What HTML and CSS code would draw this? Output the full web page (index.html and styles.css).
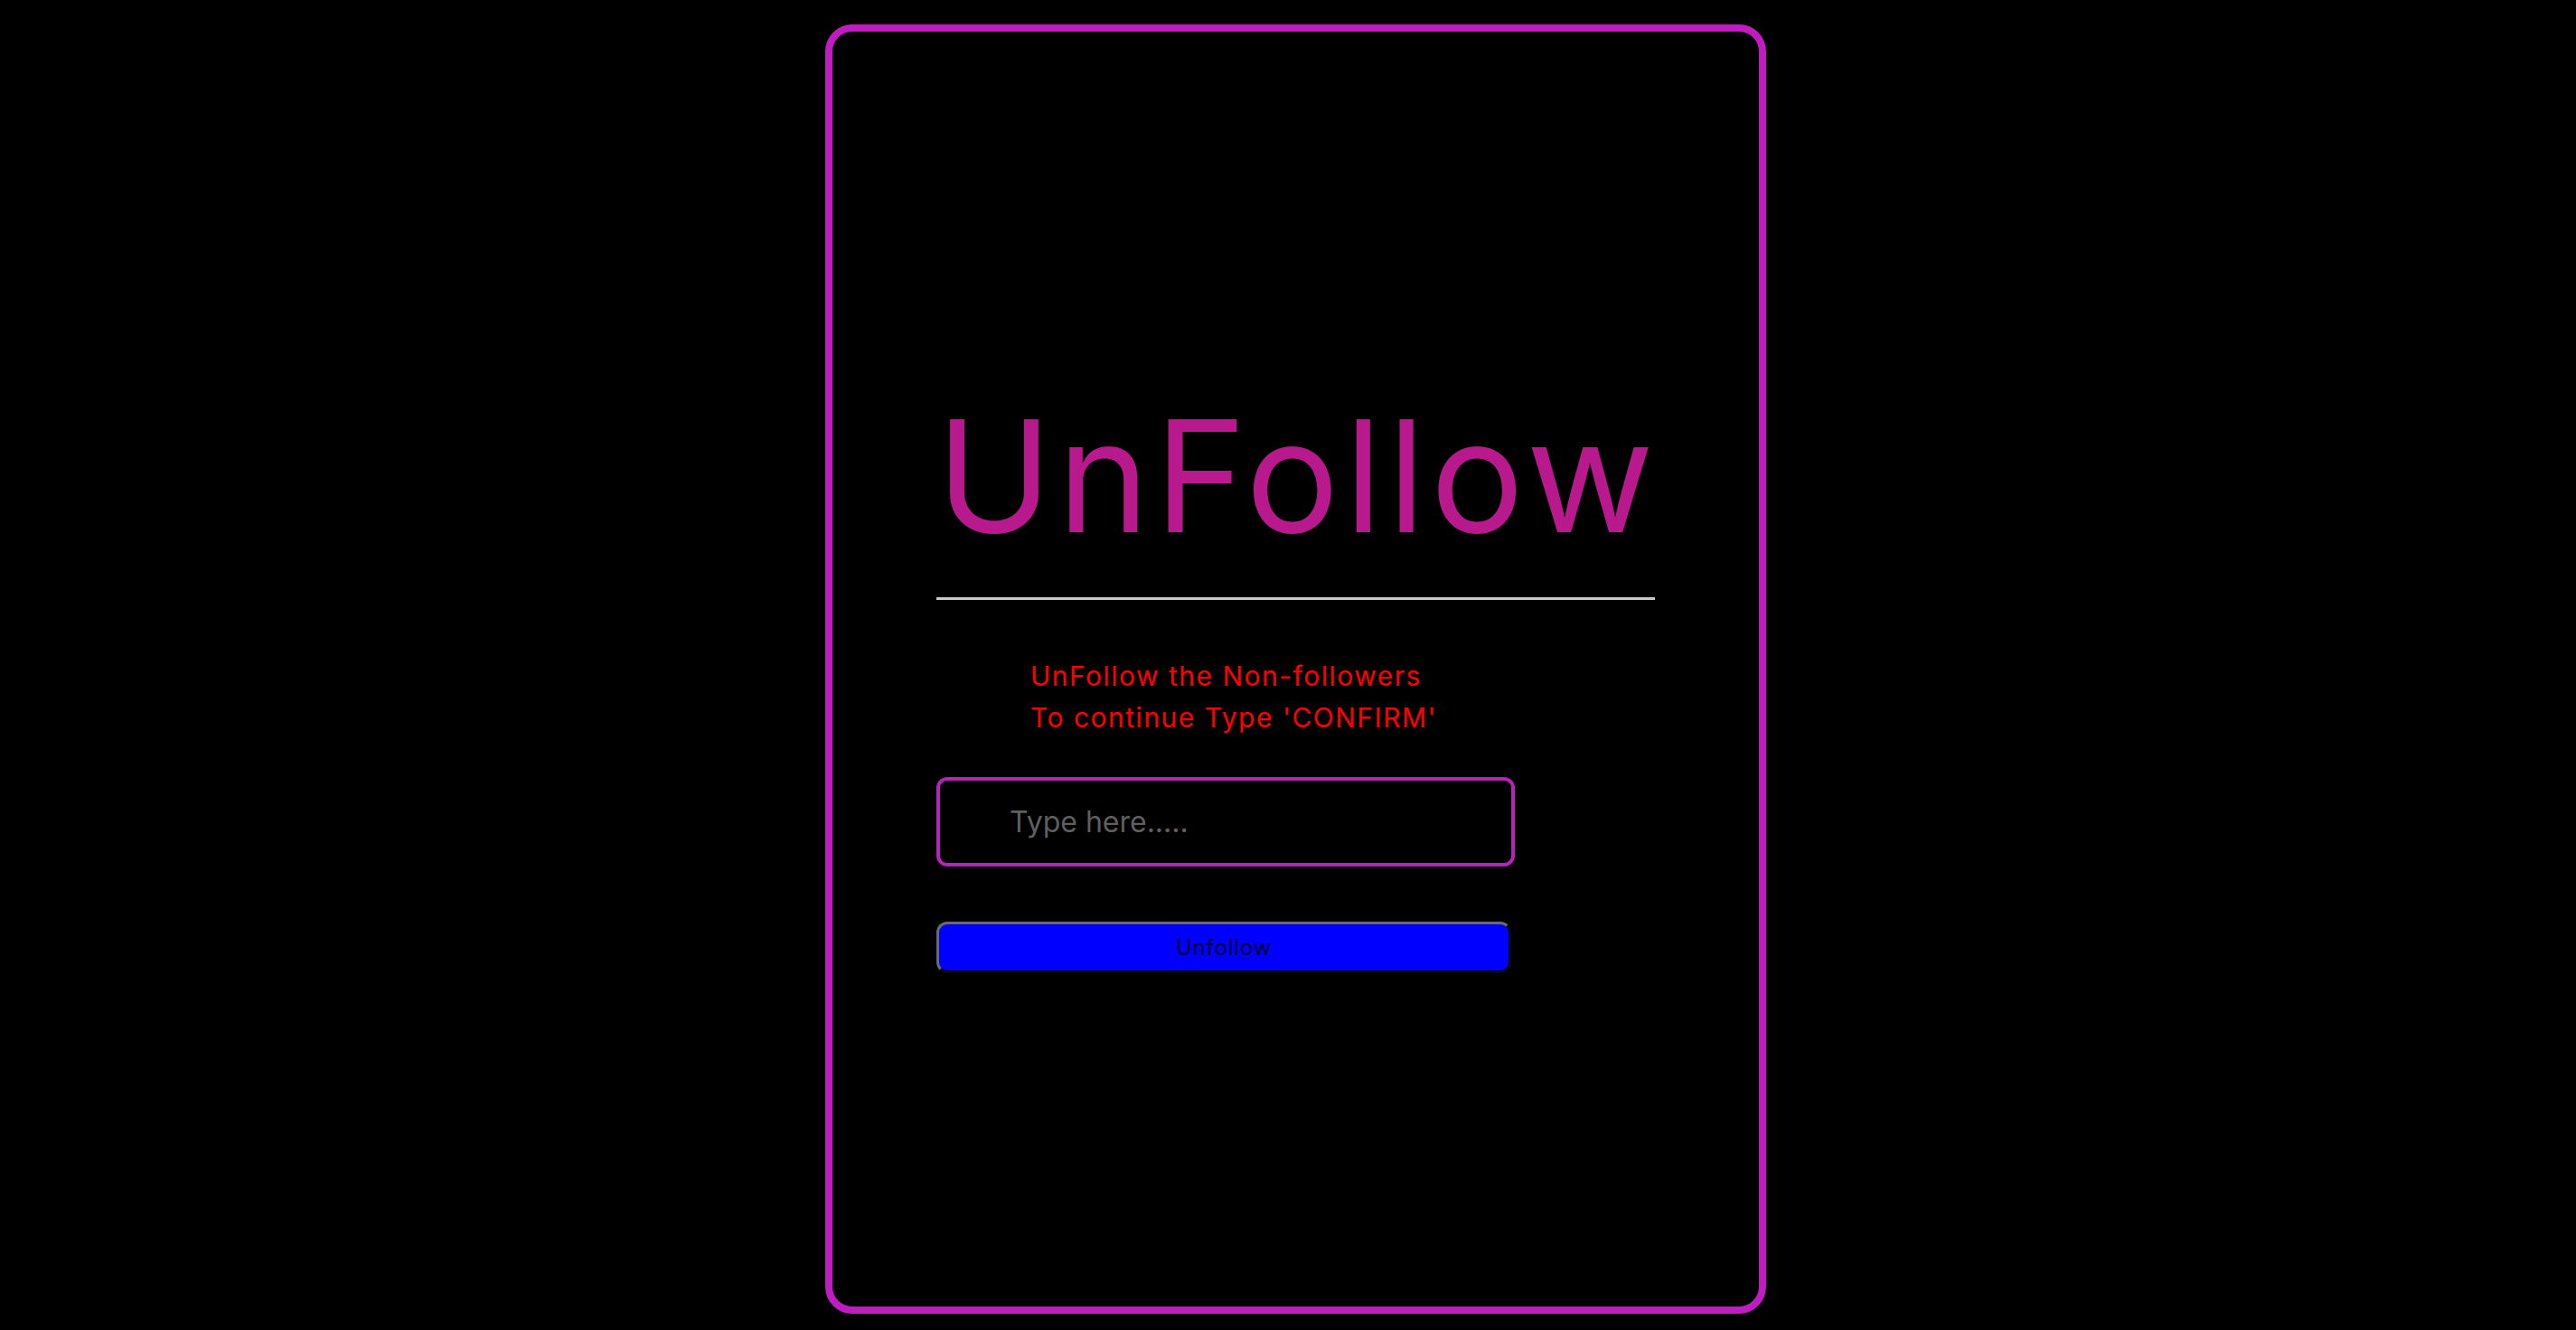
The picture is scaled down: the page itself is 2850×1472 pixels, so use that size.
FILE: index.html
```html
<!DOCTYPE html>
<html lang="en">
<head>
<meta charset="utf-8">
<title>UnFollow</title>
<link rel="stylesheet" href="styles.css">
</head>
<body>
  <main class="card">
    <h1 class="title">UnFollow</h1>
    <hr class="divider">
    <div class="notice">
      <p>UnFollow the Non-followers</p>
      <p>To continue Type 'CONFIRM'</p>
    </div>
    <input class="confirm-input" type="text" placeholder="Type here.....">
    <button class="unfollow-btn" type="button">Unfollow</button>
  </main>
</body>
</html>
```

FILE: styles.css
```css
html, body {
  margin: 0;
  padding: 0;
  background: #000;
}

body {
  width: 2850px;
  height: 1472px;
  box-sizing: border-box;
  padding: 27px 0 0 17px;
  display: flex;
  justify-content: center;
  align-items: flex-start;
  font-family: "Inter", "Liberation Sans", sans-serif;
}

.card {
  box-sizing: border-box;
  width: 1041px;
  height: 1427px;
  border: 8px solid #bf1cc1;
  border-radius: 30px;
  padding: 0 115px;
  display: flex;
  flex-direction: column;
  align-items: flex-start;
}

.title {
  margin: 405px 0 0 0;
  font-size: 172px;
  line-height: 1;
  font-weight: 400;
  color: #b8198c;
  letter-spacing: 6px;
  white-space: nowrap;
}

.divider {
  align-self: stretch;
  margin: 49px 0 0 0;
  height: 3px;
  border: none;
  background: #cacaca;
}

.notice {
  margin: 61px 0 0 104px;
  color: #ff0000;
  font-size: 30px;
  line-height: 46px;
  letter-spacing: 1.5px;
  white-space: nowrap;
}

.notice p {
  margin: 0;
}

.confirm-input {
  box-sizing: border-box;
  width: 640px;
  height: 99px;
  margin-top: 43px;
  border: 4px solid #b524b6;
  border-radius: 12px;
  background: #000;
  padding: 0 0 0 77px;
  font-family: inherit;
  font-size: 32px;
  color: #ccc;
  outline: none;
}

.confirm-input::placeholder {
  color: #5f5f5f;
}

.unfollow-btn {
  box-sizing: border-box;
  width: 636px;
  height: 57px;
  margin-top: 61px;
  border-style: solid;
  border-width: 3px;
  border-color: #6a6a6a #0a0a0a #0a0a0a #6a6a6a;
  border-radius: 12px;
  background: #0000ff;
  color: #000030;
  font-family: inherit;
  font-size: 24px;
  letter-spacing: 0.8px;
  padding: 0;
}
```
